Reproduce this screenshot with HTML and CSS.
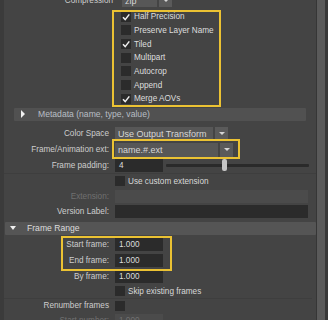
FILE: index.html
```html
<!DOCTYPE html>
<html lang="en">
<head>
    <meta charset="UTF-8">
    <title>Render Settings</title>
    <link rel="stylesheet" href="styles.css">
</head>
<body>
<div class="window">
    <div class="panel">
        <div class="sheet">
            <div class="row row-top">
                <span class="label">Compression</span>
                <div class="combo combo-zip"><span class="combo-text">zip</span><span class="combo-btn"><i class="arrow"></i></span></div>
            </div>

            <div class="checks hl hl-checks">
                <div class="check-row"><span class="box on"><svg viewBox="0 0 10 10"><path d="M2 5.3 L4.2 7.6 L8.3 2.4"/></svg></span>Half Precision</div>
                <div class="check-row"><span class="box"></span>Preserve Layer Name</div>
                <div class="check-row"><span class="box on"><svg viewBox="0 0 10 10"><path d="M2 5.3 L4.2 7.6 L8.3 2.4"/></svg></span>Tiled</div>
                <div class="check-row"><span class="box"></span>Multipart</div>
                <div class="check-row"><span class="box"></span>Autocrop</div>
                <div class="check-row"><span class="box"></span>Append</div>
                <div class="check-row"><span class="box on"><svg viewBox="0 0 10 10"><path d="M2 5.3 L4.2 7.6 L8.3 2.4"/></svg></span>Merge AOVs</div>
            </div>

            <div class="section-head sub"><i class="tri-right"></i>Metadata (name, type, value)</div>

            <div class="form">
                <div class="row">
                    <span class="label">Color Space</span>
                    <div class="combo combo-cs"><span class="combo-text">Use Output Transform</span><span class="combo-btn"><i class="arrow"></i></span></div>
                </div>
                <div class="row hl hl-ext">
                    <span class="label">Frame/Animation ext:</span>
                    <div class="combo combo-ext"><span class="combo-text">name.#.ext</span><span class="combo-btn"><i class="arrow"></i></span></div>
                </div>
                <div class="row">
                    <span class="label">Frame padding:</span>
                    <div class="pad">
                        <span class="field short">4</span>
                        <div class="slider"><span class="handle"></span></div>
                    </div>
                </div>
                <div class="row row-check sep-top">
                    <span></span>
                    <div class="check-inline"><span class="box"></span>Use custom extension</div>
                </div>
                <div class="row row-thin">
                    <span class="label dim">Extension:</span>
                    <span class="field long disabled"></span>
                </div>
                <div class="row row-thin">
                    <span class="label">Version Label:</span>
                    <span class="field long"></span>
                </div>
            </div>

            <div class="section-head main"><i class="tri-down"></i>Frame Range</div>

            <div class="form range">
                <div class="hl hl-range">
                    <div class="row">
                        <span class="label">Start frame:</span>
                        <span class="field short">1.000</span>
                    </div>
                    <div class="row">
                        <span class="label">End frame:</span>
                        <span class="field short">1.000</span>
                    </div>
                </div>
                <div class="row">
                    <span class="label">By frame:</span>
                    <span class="field short">1.000</span>
                </div>
                <div class="row row-skip">
                    <span></span>
                    <div class="check-inline"><span class="box"></span>Skip existing frames</div>
                </div>
                <div class="row row-renum">
                    <span class="label">Renumber frames</span>
                    <span class="box"></span>
                </div>
                <div class="row">
                    <span class="label dim">Start number:</span>
                    <span class="field short disabled dimtext">1.000</span>
                </div>
            </div>
        </div>
    </div>
    <div class="scrollbar"></div>
</div>
</body>
</html>
```

FILE: styles.css
```css
body {
    margin: 0;
    background: #444444;
    font-family: "Liberation Sans", Arial, sans-serif;
    font-size: 8.2px;
    color: #cdcdcd;
    overflow: hidden;
}
.window {
    display: flex;
    width: 328px;
    height: 320px;
}
.panel {
    flex: 1;
    border-left: 4px solid #3b3b3b;
    border-right: 1px solid #363636;
    overflow: hidden;
}
.sheet {
    margin-top: -7px;
}
.scrollbar {
    width: 11px;
    background: linear-gradient(to right, #5a5a5a 8px, #383838 8px);
}

/* rows */
.row {
    display: grid;
    grid-template-columns: 105px 1fr;
    column-gap: 6px;
    align-items: center;
    height: 16px;
}
.row-top {
    grid-template-columns: 109px 1fr;
    column-gap: 9px;
    height: 14px;
}
.row-thin {
    height: 15px;
}
.row-check {
    height: 15px;
}
.row-skip {
    height: 14px;
    border-bottom: 1px solid #3e3e3e;
    margin-right: 4px;
    box-sizing: border-box;
}
.row-renum {
    height: 14px;
}
.sep-top {
    border-top: 1px solid #3e3e3e;
    margin-top: -1px;
}
.label {
    text-align: right;
    white-space: nowrap;
}
.dim {
    color: #707070;
}

/* combos */
.combo {
    display: flex;
    height: 14px;
    justify-self: start;
    font-size: 9px;
}
.combo-text {
    flex: 1;
    background: #575757;
    padding-left: 3px;
    line-height: 14px;
    color: #d6d6d6;
    white-space: nowrap;
    overflow: hidden;
}
.combo-btn {
    width: 13px;
    margin-left: 2px;
    background: #5a5a5a;
    display: flex;
    align-items: center;
    justify-content: center;
}
.arrow {
    width: 0;
    height: 0;
    border-left: 3px solid transparent;
    border-right: 3px solid transparent;
    border-top: 3px solid #d4d4d4;
}
.combo-zip {
    width: 50px;
    height: 13px;
}
.combo-cs {
    width: 113px;
}
.combo-ext {
    width: 118px;
}

/* checkboxes */
.checks {
    margin-top: 3px;
    margin-left: 117px;
    color: #dedede;
}
.check-row {
    display: flex;
    align-items: center;
    height: 13.67px;
}
.box {
    display: inline-block;
    width: 10px;
    height: 10px;
    background: #2b2b2b;
    margin-right: 3px;
    flex: none;
}
.box svg {
    display: block;
    width: 10px;
    height: 10px;
}
.box svg path {
    fill: none;
    stroke: #eeeeee;
    stroke-width: 1.5;
}
.check-inline {
    display: flex;
    align-items: center;
    color: #d8d8d8;
}

/* highlight frames drawn over the form */
.hl {
    position: relative;
}
.hl::after {
    content: "";
    position: absolute;
    border: 2px solid #ebc233;
    box-sizing: border-box;
    pointer-events: none;
}
.hl-checks::after {
    left: -9px;
    width: 109px;
    top: 0;
    bottom: -1px;
}
.hl-ext::after {
    left: 108px;
    width: 128px;
    top: -3px;
    bottom: -1px;
}
.hl-range::after {
    left: 57px;
    width: 111px;
    top: -1px;
    bottom: -2px;
}

/* section headers */
.section-head {
    display: flex;
    align-items: center;
    height: 13px;
    background: #515151;
    border-radius: 1px;
    font-size: 8.6px;
}
.section-head.sub {
    margin: 2px 10px 0 10px;
    color: #b8bec4;
}
.section-head.main {
    margin: 3px 0 0 1px;
    background: #555555;
    color: #dcdcdc;
}
.tri-right {
    width: 0;
    height: 0;
    border-top: 4px solid transparent;
    border-bottom: 4px solid transparent;
    border-left: 4px solid #f0f0f0;
    margin: 0 13px 0 7px;
}
.tri-down {
    width: 0;
    height: 0;
    border-left: 3.5px solid transparent;
    border-right: 3.5px solid transparent;
    border-top: 4px solid #f0f0f0;
    margin: 0 11px 0 5px;
}
.form {
    padding-top: 5px;
}
.form.range {
    padding-top: 2px;
}

/* fields */
.field {
    display: block;
    height: 13px;
    line-height: 13px;
    background: #2b2b2b;
    color: #dcdcdc;
    padding-left: 4px;
    box-sizing: border-box;
}
.field.short {
    width: 48px;
}
.field.long {
    margin-right: 8px;
}
.field.disabled {
    background: #4b4b4b;
}
.dimtext {
    color: #707070;
}
.pad {
    display: flex;
    align-items: center;
}
.slider {
    position: relative;
    flex: 1;
    height: 3px;
    margin: 0 7px 0 3px;
    background: #2a2a2a;
    border-radius: 1px;
}
.handle {
    position: absolute;
    left: 56px;
    top: -5px;
    width: 5px;
    height: 12px;
    background: #c6c6c6;
    border-radius: 2px;
}
```
